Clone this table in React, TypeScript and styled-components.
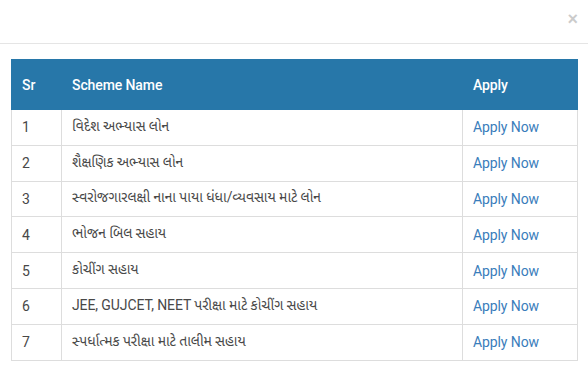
import * as React from 'react';
import styled, { createGlobalStyle } from 'styled-components';

const GlobalStyle = createGlobalStyle`
  body {
    margin: 0;
    background: #fff;
    font-family: Roboto, "Noto Sans", "Noto Sans Gujarati", sans-serif;
    color: #484848;
  }
`;

const schemes = [
  'વિદેશ અભ્યાસ લોન',
  'શૈક્ષણિક અભ્યાસ લોન',
  'સ્વરોજગારલક્ષી નાના પાયા ધંધા/વ્યવસાય માટે લોન',
  'ભોજન બિલ સહાય',
  'કોચીંગ સહાય',
  'JEE, GUJCET, NEET પરીક્ષા માટે કોચીંગ સહાય',
  'સ્પર્ધાત્મક પરીક્ષા માટે તાલીમ સહાય',
];

export default function App() {
  return (
    <Modal>
      <GlobalStyle />
      <ModalHeader>
        <CloseButton aria-label="Close">×</CloseButton>
      </ModalHeader>
      <ModalBody>
        <SchemeTable>
          <thead>
            <tr>
              <HeadCell width={50}>Sr</HeadCell>
              <HeadCell>Scheme Name</HeadCell>
              <HeadCell width={115}>Apply</HeadCell>
            </tr>
          </thead>
          <tbody>
            {schemes.map((name, index) => (
              <tr key={`scheme-${index}`}>
                <Cell>{index + 1}</Cell>
                <Cell>{name}</Cell>
                <Cell>
                  <ApplyLink href="#">Apply Now</ApplyLink>
                </Cell>
              </tr>
            ))}
          </tbody>
        </SchemeTable>
      </ModalBody>
    </Modal>
  );
}

const Modal = styled.div`
  width: 588px;
  height: 375px;
  background: #fff;
`;

const ModalHeader = styled.div`
  height: 44px;
  border-bottom: 1px solid #e5e5e5;
  display: flex;
  justify-content: flex-end;
  align-items: flex-start;
  padding: 10px 10px 0 0;
  box-sizing: border-box;
`;

const CloseButton = styled.button`
  border: 0;
  background: none;
  padding: 0;
  font-family: "Liberation Sans", Arial, sans-serif;
  font-size: 18px;
  font-weight: 700;
  line-height: 18px;
  color: #000;
  opacity: 0.2;
  cursor: pointer;
`;

const ModalBody = styled.div`
  padding: 15px 10px 0 11px;
`;

const SchemeTable = styled.table`
  width: 100%;
  border-collapse: collapse;
  font-size: 14px;
  letter-spacing: -0.1px;
`;

const HeadCell = styled.th<{ width?: number }>`
  width: ${(p) => (p.width ? `${p.width}px` : 'auto')};
  height: 50px;
  padding: 0 10px;
  box-sizing: border-box;
  background: #2777a9;
  color: #fff;
  font-weight: 500;
  text-align: left;
  border: 1px solid #2777a9;
  border-left-color: #d6e4ee;
  &:first-child {
    border-left-color: #2777a9;
  }
`;

const Cell = styled.td`
  height: 35.8px;
  padding: 0 10px;
  box-sizing: border-box;
  border: 1px solid #ddd;
  vertical-align: middle;
`;

const ApplyLink = styled.a`
  color: #3a7dbb;
  text-decoration: none;
`;
